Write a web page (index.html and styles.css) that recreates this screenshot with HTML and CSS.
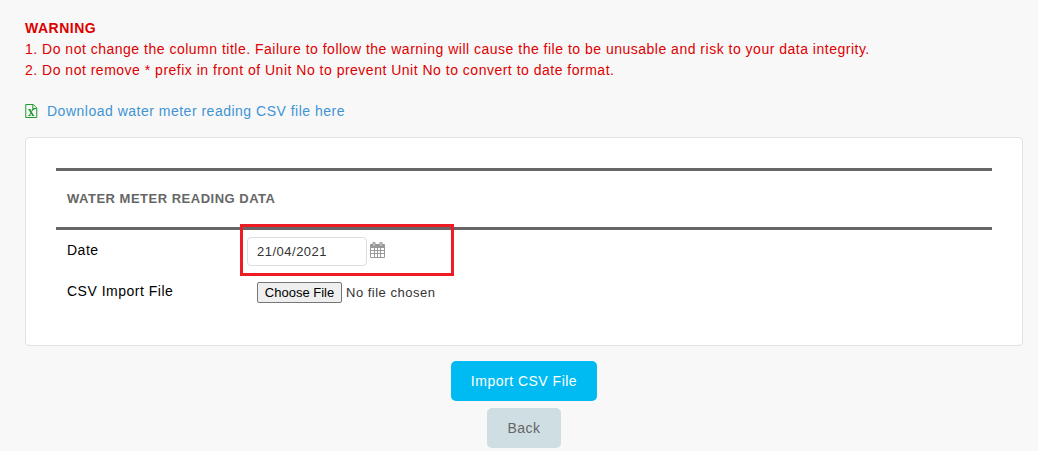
FILE: index.html
```html
<!DOCTYPE html>
<html lang="en">
<head>
    <meta charset="UTF-8">
    <meta name="viewport" content="width=device-width, initial-scale=1.0">
    <title>Import Water Meter Reading</title>
    <link rel="stylesheet" href="styles.css">
</head>
<body>
    <div class="warning">
        <strong>WARNING</strong>
        <p>1. Do not change the column title. Failure to follow the warning will cause the file to be unusable and risk to your data integrity.</p>
        <p>2. Do not remove * prefix in front of Unit No to prevent Unit No to convert to date format.</p>
    </div>
    <a class="download" href="#">
        <svg class="excel-icon" width="12" height="14" viewBox="0 0 12 14">
            <path d="M.5 .5H8L11.5 4V13.5H.5ZM7.5 .5V4.5H11.5" fill="none" stroke="#1f9a2c"/>
            <path d="M3 5.5H5.4M6.6 5.5H9M3 11.5H5.4M6.6 11.5H9M7.6 5.5L4 11.5" fill="none" stroke="#1f9a2c" stroke-width=".9"/>
            <path d="M4.2 5.5L7.8 11.5" fill="none" stroke="#1f9a2c" stroke-width="1.5"/>
        </svg>
        <span>Download water meter reading CSV file here</span>
    </a>
    <form id="importForm">
        <div class="card">
            <h2>WATER METER READING DATA</h2>
            <div class="row date-row">
                <label for="date">Date</label>
                <input type="text" id="date" value="21/04/2021">
                <svg class="calendar-icon" width="15" height="16" viewBox="0 0 15 16">
                    <path d="M0 3Q0 2 1 2H14Q15 2 15 3V15Q15 16 14 16H1Q0 16 0 15Z" fill="#999"/>
                    <path d="M1 6H4V8H1ZM5 6H7V8H5ZM8 6H10V8H8ZM11 6H14V8H11ZM1 9H4V11H1ZM5 9H7V11H5ZM8 9H10V11H8ZM11 9H14V11H11ZM1 12H4V15H1ZM5 12H7V15H5ZM8 12H10V15H8ZM11 12H14V15H11Z" fill="#fff"/>
                    <rect x="2.5" y="0" width="3" height="4.5" rx="1.2" fill="#999"/>
                    <rect x="9.5" y="0" width="3" height="4.5" rx="1.2" fill="#999"/>
                    <path d="M4 1V4M11 1V4" stroke="#ddd"/>
                </svg>
                <div class="highlight"></div>
            </div>
            <div class="row file-row">
                <label for="csvFile">CSV Import File</label>
                <input type="file" id="csvFile">
            </div>
        </div>
        <div class="actions">
            <button type="submit" class="import">Import CSV File</button>
            <button type="button" class="back">Back</button>
        </div>
    </form>
</body>
</html>
```
FILE: styles.css
```css
* {
    box-sizing: border-box;
}
body {
    margin: 0;
    padding: 18px 15px 0 25px;
    height: 451px;
    overflow: hidden;
    background-color: #f8f8f8;
    font-family: Arial, "Liberation Sans", sans-serif;
    font-size: 14px;
    line-height: 21px;
    letter-spacing: 0.5px;
    color: #000;
}
.warning {
    color: #dd0000;
}
.warning strong {
    display: block;
}
.warning p {
    margin: 0;
    white-space: nowrap;
}
.download {
    display: flex;
    align-items: center;
    gap: 10px;
    margin-top: 20px;
    color: #4094d4;
    text-decoration: none;
}
.excel-icon {
    width: 12.5px;
    margin-right: -0.5px;
    margin-bottom: 1px;
}
.card {
    height: 209px;
    margin-top: 15px;
    padding: 30px;
    background-color: white;
    border: 1px solid #e2e2e2;
    border-radius: 4px;
}
h2 {
    height: 62px;
    margin: 0;
    padding-left: 11px;
    border-top: 3px solid #666;
    border-bottom: 3px solid #666;
    color: #666;
    font-size: 13px;
    letter-spacing: 0.5px;
    line-height: 55px;
}
.row {
    display: flex;
    align-items: center;
    height: 41px;
    padding-left: 11px;
}
.row label {
    width: 180px;
}
.date-row {
    position: relative;
}
#date {
    width: 120px;
    height: 29px;
    margin-top: 2px;
    padding: 0 9px;
    border: 1px solid #ddd;
    border-radius: 4px;
    color: #333;
    font-family: inherit;
    font-size: 13px;
    letter-spacing: 0.5px;
}
.calendar-icon {
    margin-left: 3px;
    margin-bottom: 1px;
}
.highlight {
    position: absolute;
    top: -6px;
    left: 184px;
    width: 214px;
    height: 52px;
    border: 3px solid #ed1c24;
}
#csvFile {
    margin-top: 2px;
    margin-left: 10px;
    color: #333;
    font-family: inherit;
    font-size: 13px;
    letter-spacing: 0.5px;
}
#csvFile::file-selector-button {
    width: 85px;
    height: 21px;
    margin-right: 4px;
    padding: 1px 6px;
    border: 1px solid #767676;
    border-radius: 2px;
    background-color: #efefef;
    color: #000;
    font-family: inherit;
    font-size: 13px;
    letter-spacing: 0;
}
.actions {
    display: flex;
    flex-direction: column;
    align-items: center;
    gap: 7px;
    margin-top: 15px;
}
.actions button {
    height: 40px;
    padding: 0;
    border: none;
    border-radius: 5px;
    font-family: inherit;
    font-size: 14px;
    letter-spacing: 0.5px;
    white-space: nowrap;
    cursor: pointer;
}
.actions .import {
    width: 146px;
    background-color: #00bbf2;
    color: white;
}
.actions .back {
    width: 74px;
    background-color: #cfdee2;
    color: #666;
}
```
